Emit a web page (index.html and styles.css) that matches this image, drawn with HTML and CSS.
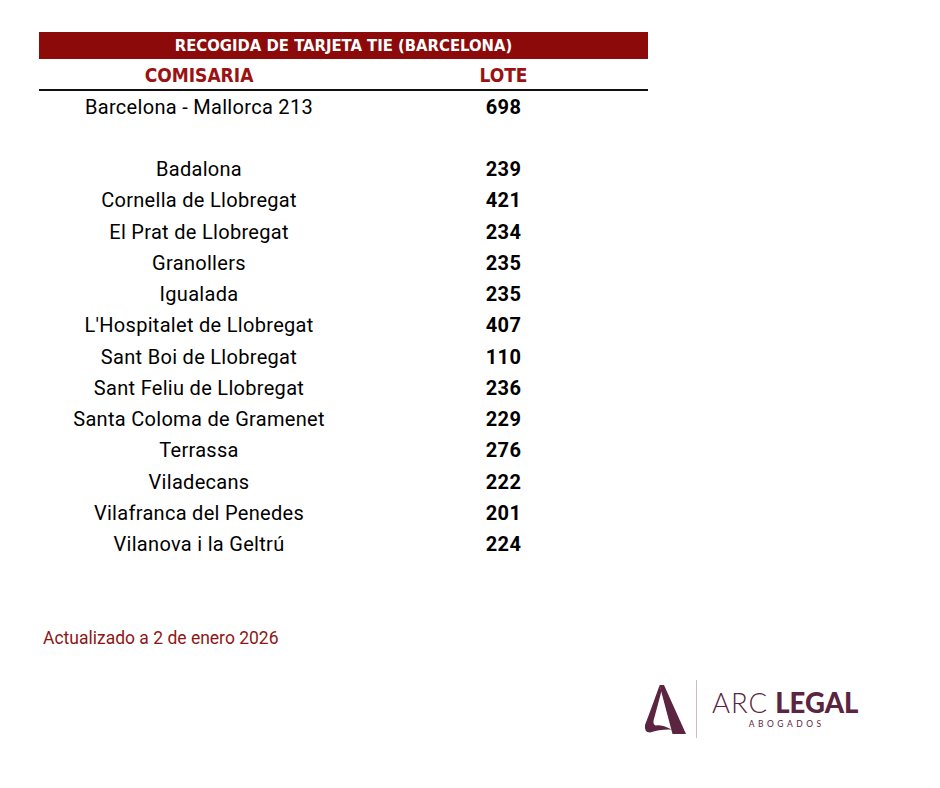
FILE: index.html
```html
<!DOCTYPE html>
<html lang="es">
<head>
<meta charset="utf-8">
<title>Recogida de tarjeta TIE (Barcelona)</title>
<link rel="stylesheet" href="styles.css">
</head>
<body>
<div class="page">
  <div class="sheet">
    <div class="title">RECOGIDA DE TARJETA TIE (BARCELONA)</div>
    <div class="row head">
      <div class="c1">COMISARIA</div>
      <div class="c2">LOTE</div>
    </div>
    <div class="row"><div class="c1">Barcelona - Mallorca 213</div><div class="c2 num">698</div></div>
    <div class="row empty"><div class="c1"></div><div class="c2"></div></div>
    <div class="row"><div class="c1">Badalona</div><div class="c2 num">239</div></div>
    <div class="row"><div class="c1">Cornella de Llobregat</div><div class="c2 num">421</div></div>
    <div class="row"><div class="c1">El Prat de Llobregat</div><div class="c2 num">234</div></div>
    <div class="row"><div class="c1">Granollers</div><div class="c2 num">235</div></div>
    <div class="row"><div class="c1">Igualada</div><div class="c2 num">235</div></div>
    <div class="row"><div class="c1">L'Hospitalet de Llobregat</div><div class="c2 num">407</div></div>
    <div class="row"><div class="c1">Sant Boi de Llobregat</div><div class="c2 num">110</div></div>
    <div class="row"><div class="c1">Sant Feliu de Llobregat</div><div class="c2 num">236</div></div>
    <div class="row"><div class="c1">Santa Coloma de Gramenet</div><div class="c2 num">229</div></div>
    <div class="row"><div class="c1">Terrassa</div><div class="c2 num">276</div></div>
    <div class="row"><div class="c1">Viladecans</div><div class="c2 num">222</div></div>
    <div class="row"><div class="c1">Vilafranca del Penedes</div><div class="c2 num">201</div></div>
    <div class="row"><div class="c1">Vilanova i la Geltrú</div><div class="c2 num">224</div></div>
  </div>
  <p class="updated">Actualizado a 2 de enero 2026</p>
  <div class="logo-wrap">
    <div class="logo">
      <svg class="mark" viewBox="0 0 46 54" width="46" height="54" aria-hidden="true">
        <path d="M19.5 3 H24 L46 52 H32.5 Z" fill="#5b2541"/>
        <path d="M19.5 3.5 Q10 30 5 43 Q4 50.5 10 50.5 Q20 47 32 47.5 Q21 42 15.5 43.5 Q12.8 42 13.6 38.5 L21.5 9 Z" fill="#5b2541"/>
      </svg>
      <div class="divider"></div>
      <div class="wordmark">
        <div class="name"><span class="arc">ARC</span> <span class="legal">LEGAL</span></div>
        <div class="sub">ABOGADOS</div>
      </div>
    </div>
  </div>
</div>
</body>
</html>
```
FILE: styles.css
```css
html, body {
  margin: 0;
  padding: 0;
  background: #ffffff;
}

.page {
  width: 940px;
  height: 788px;
  padding: 32px 0 0 39px;
  box-sizing: border-box;
  font-family: Roboto, "Noto Sans", sans-serif;
  color: #000;
}

.sheet {
  width: 609px;
}

.title {
  height: 27px;
  line-height: 28px;
  background: #8c0a0a;
  color: #fff;
  text-align: center;
  font-family: "Liberation Sans Narrow", "DejaVu Sans Condensed", sans-serif;
  font-weight: bold;
  font-size: 16.5px;
}

.row {
  display: grid;
  grid-template-columns: 320px 289px;
  height: 31.25px;
  align-items: center;
  font-size: 20px;
  letter-spacing: 0.3px;
}

.row .c1,
.row .c2 {
  text-align: center;
}

.num {
  font-weight: bold;
  letter-spacing: 0.4px;
}

.head {
  height: 28px;
  border-bottom: 2px solid #111;
  color: #9c1111;
  font-family: "Liberation Sans Narrow", "DejaVu Sans Condensed", sans-serif;
  font-weight: bold;
  font-size: 19px;
  letter-spacing: 0;
  align-items: center;
  padding-top: 2px;
}

.updated {
  margin: 68px 0 0 4px;
  color: #8e1616;
  font-size: 17.5px;
  line-height: 20px;
}

.logo-wrap {
  display: flex;
  justify-content: flex-start;
  margin: 32px 0 0 601px;
}

.logo {
  display: flex;
  align-items: center;
}

.mark {
  display: block;
}

.divider {
  width: 1px;
  height: 58px;
  background: #cdbcc4;
  margin: 0 15px 0 10px;
}

.wordmark {
  display: flex;
  flex-direction: column;
  align-items: center;
  color: #5b2541;
}

.name {
  font-family: Lato, "Open Sans", sans-serif;
  font-size: 27.5px;
  line-height: 30px;
  white-space: nowrap;
}

.arc {
  font-weight: 300;
  letter-spacing: 1px;
}

.legal {
  font-weight: 900;
}

.sub {
  font-family: Lato, sans-serif;
  font-size: 8.5px;
  letter-spacing: 3.5px;
  margin-top: 1px;
  padding-left: 3px;
}
```
